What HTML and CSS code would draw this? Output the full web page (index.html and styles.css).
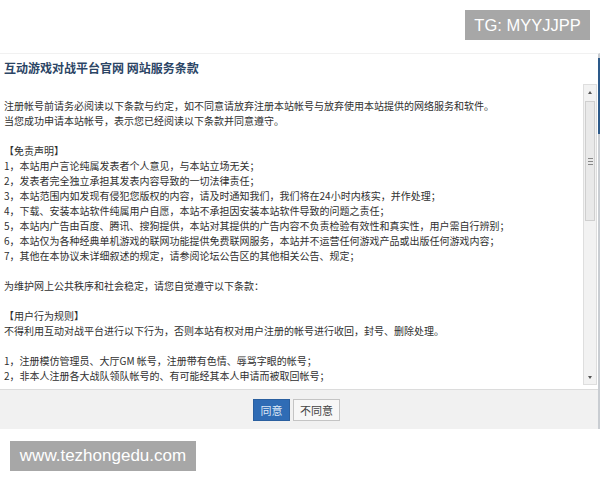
FILE: index.html
```html
<!DOCTYPE html>
<html lang="zh-CN">
<head>
<meta charset="utf-8">
<title>网站服务条款</title>
<link rel="stylesheet" href="styles.css">
</head>
<body>
<div class="page">
  <div class="topbar">
    <div class="badge">TG: MYYJJPP</div>
  </div>
  <div class="dialog">
    <div class="dlg-head">互动游戏对战平台官网 网站服务条款</div>
    <div class="dlg-body">
      <div class="content">
        <p>注册帐号前请务必阅读以下条款与约定，如不同意请放弃注册本站帐号与放弃使用本站提供的网络服务和软件。<br>当您成功申请本站帐号，表示您已经阅读以下条款并同意遵守。</p>
        <p>【免责声明】<br>1，本站用户言论纯属发表者个人意见，与本站立场无关；<br>2，发表者完全独立承担其发表内容导致的一切法律责任；<br>3，本站范围内如发现有侵犯您版权的内容，请及时通知我们，我们将在24小时内核实，并作处理；<br>4，下载、安装本站软件纯属用户自愿，本站不承担因安装本站软件导致的问题之责任；<br>5，本站内广告由百度、腾讯、搜狗提供，本站对其提供的广告内容不负责检验有效性和真实性，用户需自行辨别；<br>6，本站仅为各种经典单机游戏的联网功能提供免费联网服务，本站并不运营任何游戏产品或出版任何游戏内容；<br>7，其他在本协议未详细叙述的规定，请参阅论坛公告区的其他相关公告、规定；</p>
        <p>为维护网上公共秩序和社会稳定，请您自觉遵守以下条款：</p>
        <p>【用户行为规则】<br>不得利用互动对战平台进行以下行为，否则本站有权对用户注册的帐号进行收回，封号、删除处理。</p>
        <p>1，注册模仿管理员、大厅GM 帐号，注册带有色情、辱骂字眼的帐号；<br>2，非本人注册各大战队领队帐号的、有可能经其本人申请而被取回帐号；</p>
      </div>
      <div class="scrollbar">
        <div class="arrow up"></div>
        <div class="track">
          <div class="thumb"><span class="grip"></span></div>
        </div>
        <div class="arrow down"></div>
      </div>
    </div>
    <div class="dlg-foot">
      <button class="btn primary">同意</button>
      <button class="btn">不同意</button>
    </div>
  </div>
  <div class="watermark">www.tezhongedu.com</div>
</div>
</body>
</html>
```

FILE: styles.css
```css
html, body {
  margin: 0;
  padding: 0;
  background: #ffffff;
}
.page {
  width: 600px;
  height: 480px;
  overflow: hidden;
  font-family: "Noto Sans CJK SC", "Liberation Sans", sans-serif;
}
.topbar {
  height: 53px;
  display: flex;
  justify-content: flex-end;
  align-items: flex-start;
}
.badge {
  margin-top: 10px;
  margin-right: 10px;
  width: 125px;
  height: 30px;
  background: #a7a7a7;
  color: #ffffff;
  font-family: "Liberation Sans", Arial, sans-serif;
  font-size: 16.5px;
  line-height: 30px;
  text-align: center;
}
.dialog {
  position: relative;
  height: 376px;
  display: flex;
  flex-direction: column;
  border-top: 1px solid #f1f1f1;
  border-right: 2px solid #c9cdd2;
  box-sizing: border-box;
}
.dialog::after {
  content: "";
  position: absolute;
  right: -2px;
  top: 4px;
  width: 2px;
  height: 76px;
  background: #2d5a8a;
}
.dlg-head {
  height: 28px;
  padding-left: 4px;
  font-size: 12px;
  font-weight: bold;
  color: #2b4565;
  line-height: 28px;
}
.dlg-body {
  flex: 1;
  display: flex;
  min-height: 0;
  border-bottom: 1px solid #dcdcdc;
}
.content {
  flex: 1;
  padding: 16px 0 0 4px;
  font-size: 10px;
  line-height: 15px;
  color: #303030;
  white-space: nowrap;
  overflow: hidden;
}
.content p {
  margin: 0 0 15px 0;
}
.scrollbar {
  width: 12px;
  margin: 2px 1px 4px 0;
  display: flex;
  flex-direction: column;
  background: #f2f2f2;
  border: 1px solid #dedede;
}
.arrow {
  height: 14px;
  display: flex;
  align-items: center;
  justify-content: center;
}
.arrow::before {
  content: "";
  width: 0;
  height: 0;
  border-left: 2.5px solid transparent;
  border-right: 2.5px solid transparent;
}
.arrow.up::before {
  border-bottom: 3px solid #555;
}
.arrow.down::before {
  border-top: 3px solid #555;
}
.track {
  flex: 1;
  padding-top: 2px;
}
.thumb {
  height: 118px;
  margin: 0 1px;
  background: #e9e9e9;
  border: 1px solid #cfcfcf;
  display: flex;
  align-items: center;
  justify-content: center;
}
.grip {
  width: 5px;
  height: 5px;
  border-top: 1px solid #888;
  border-bottom: 1px solid #888;
  position: relative;
}
.grip::after {
  content: "";
  position: absolute;
  left: 0;
  right: 0;
  top: 2px;
  height: 1px;
  background: #888;
}
.dlg-foot {
  height: 39px;
  background: #f1f1f1;
  display: flex;
  justify-content: center;
  align-items: center;
  gap: 3px;
  padding-right: 5px;
  box-sizing: border-box;
}
.btn {
  height: 22px;
  padding: 0 6px;
  font-family: "Noto Sans CJK SC", sans-serif;
  font-size: 11px;
  line-height: 20px;
  color: #444;
  background: #f7f7f7;
  border: 1px solid #c4c4c4;
  border-radius: 0;
  margin: 0;
}
.btn.primary {
  width: 37px;
  padding: 0;
  background: #2f6cb5;
  border-color: #2a5f9f;
  color: #dce8f7;
}
.watermark {
  margin: 12px 0 0 10px;
  width: 186px;
  height: 30px;
  background: #a7a7a7;
  color: #ffffff;
  font-family: "Liberation Sans", Arial, sans-serif;
  font-size: 17px;
  line-height: 30px;
  text-align: center;
}
```
